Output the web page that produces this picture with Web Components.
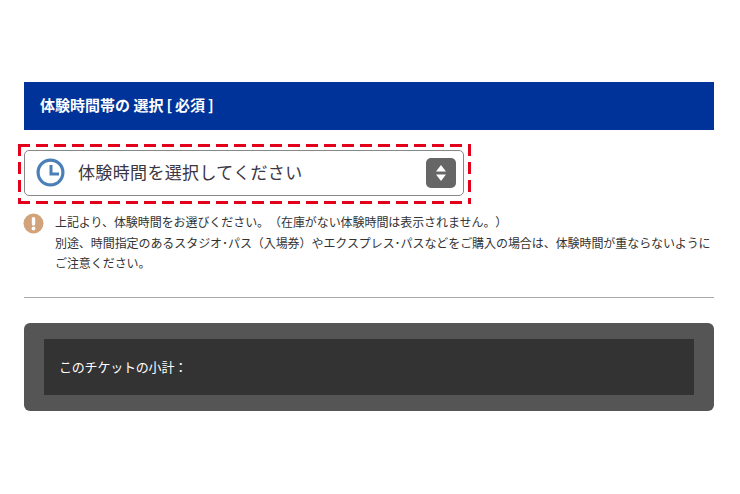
<!DOCTYPE html>
<html lang="ja"><head><meta charset="utf-8"><style>
html,body{margin:0;background:#fff}
body{font-family:"Noto Sans CJK JP","Liberation Sans",sans-serif;width:740px;height:494px;overflow:hidden}
.br{margin:0 3px 0 3px}
</style></head><body>
<ticket-page>
<section-head>体験時間帯の 選択<span class="br">[</span>必須<span class="br">]</span></section-head>
<time-select>体験時間を選択してください</time-select>
<notice-block><div>上記より、体験時間をお選びください。（在庫がない体験時間は表示されません。）</div><div>別途、時間指定のあるスタジオ･パス（入場券）やエクスプレス･パスなどをご購入の場合は、体験時間が重ならないようにご注意ください。</div></notice-block>
<subtotal-box>このチケットの小計：</subtotal-box>
</ticket-page>
<script>
function def(name,html){customElements.define(name,class extends HTMLElement{constructor(){super();this.attachShadow({mode:'open'}).innerHTML=html}})}
def('ticket-page',`<style>:host{display:flex;flex-direction:column;padding:82px 26px 0 24px;width:690px}</style><slot></slot>`);
def('section-head',`<style>:host{display:block;height:48px;background:#003399;color:#fff;font:700 15px/46px "Noto Sans CJK JP",sans-serif;padding-left:16px;margin-bottom:14px;box-sizing:border-box;white-space:pre}</style><slot></slot>`);
def('time-select',`<style>
:host{display:block;width:453px;height:60px;box-sizing:border-box;margin-left:-6px;padding:6px 7px 8px 6px;
--r:#e2001a;
background:
repeating-linear-gradient(90deg,var(--r) 0 12px,transparent 12px 18px) 0 0/100% 3px no-repeat,
repeating-linear-gradient(90deg,var(--r) 0 12px,transparent 12px 18px) 0 100%/100% 3px no-repeat,
repeating-linear-gradient(180deg,var(--r) 0 12px,transparent 12px 18px) 0 0/3px 100% no-repeat,
repeating-linear-gradient(180deg,var(--r) 0 12px,transparent 12px 18px) 100% 0/3px 100% no-repeat}
.b{height:46px;box-sizing:border-box;border:1px solid #888;border-radius:5px;display:flex;align-items:center;padding:0 7px 0 11px;background:#fff}
svg.c{flex:none;margin:0 13px 1px 0}
.t{flex:1;font-size:17px;letter-spacing:.35px;color:#3c3542;line-height:1;white-space:nowrap;padding-bottom:3px}
.a{flex:none;width:30px;height:30px;border-radius:5px;background:#666;display:flex;align-items:center;justify-content:center}
</style><div class="b"><svg class="c" width="29" height="29" viewBox="0 0 29 29"><circle cx="14.5" cy="14.5" r="12.4" fill="none" stroke="#4a7fb8" stroke-width="3.2"/><path d="M15 7V16H23" fill="none" stroke="#4a7fb8" stroke-width="3"/></svg><div class="t"><slot></slot></div><div class="a"><svg width="10" height="16" viewBox="0 0 10 16"><path d="M5 0L10 6.5H0zM5 16L0 9.5H10z" fill="#fff"/></svg></div></div>`);
def('notice-block',`<style>
:host{display:flex;margin-top:8px;padding-bottom:23px;border-bottom:1px solid #aaa;color:#333;font-size:12px;line-height:20.5px}
svg{flex:none;margin:1px 11px 0 -1px}
.m{flex:1;letter-spacing:-.07px;text-spacing-trim:space-all}
</style><svg width="21" height="21" viewBox="0 0 21 21"><circle cx="10.5" cy="10.5" r="10" fill="#d2a27a"/><rect x="8.8" y="4" width="3.4" height="8.5" rx="1.5" fill="#fff"/><circle cx="10.5" cy="15.5" r="1.9" fill="#fff"/></svg><div class="m"><slot></slot></div>`);
def('subtotal-box',`<style>
:host{display:block;margin-top:25px;background:#555;border-radius:6px;padding:16px 20px}
.i{height:56px;background:#333;color:#fff;font-size:13px;letter-spacing:-.2px;display:flex;align-items:center;padding-left:15px}
</style><div class="i"><slot></slot></div>`);
</script></body></html>
